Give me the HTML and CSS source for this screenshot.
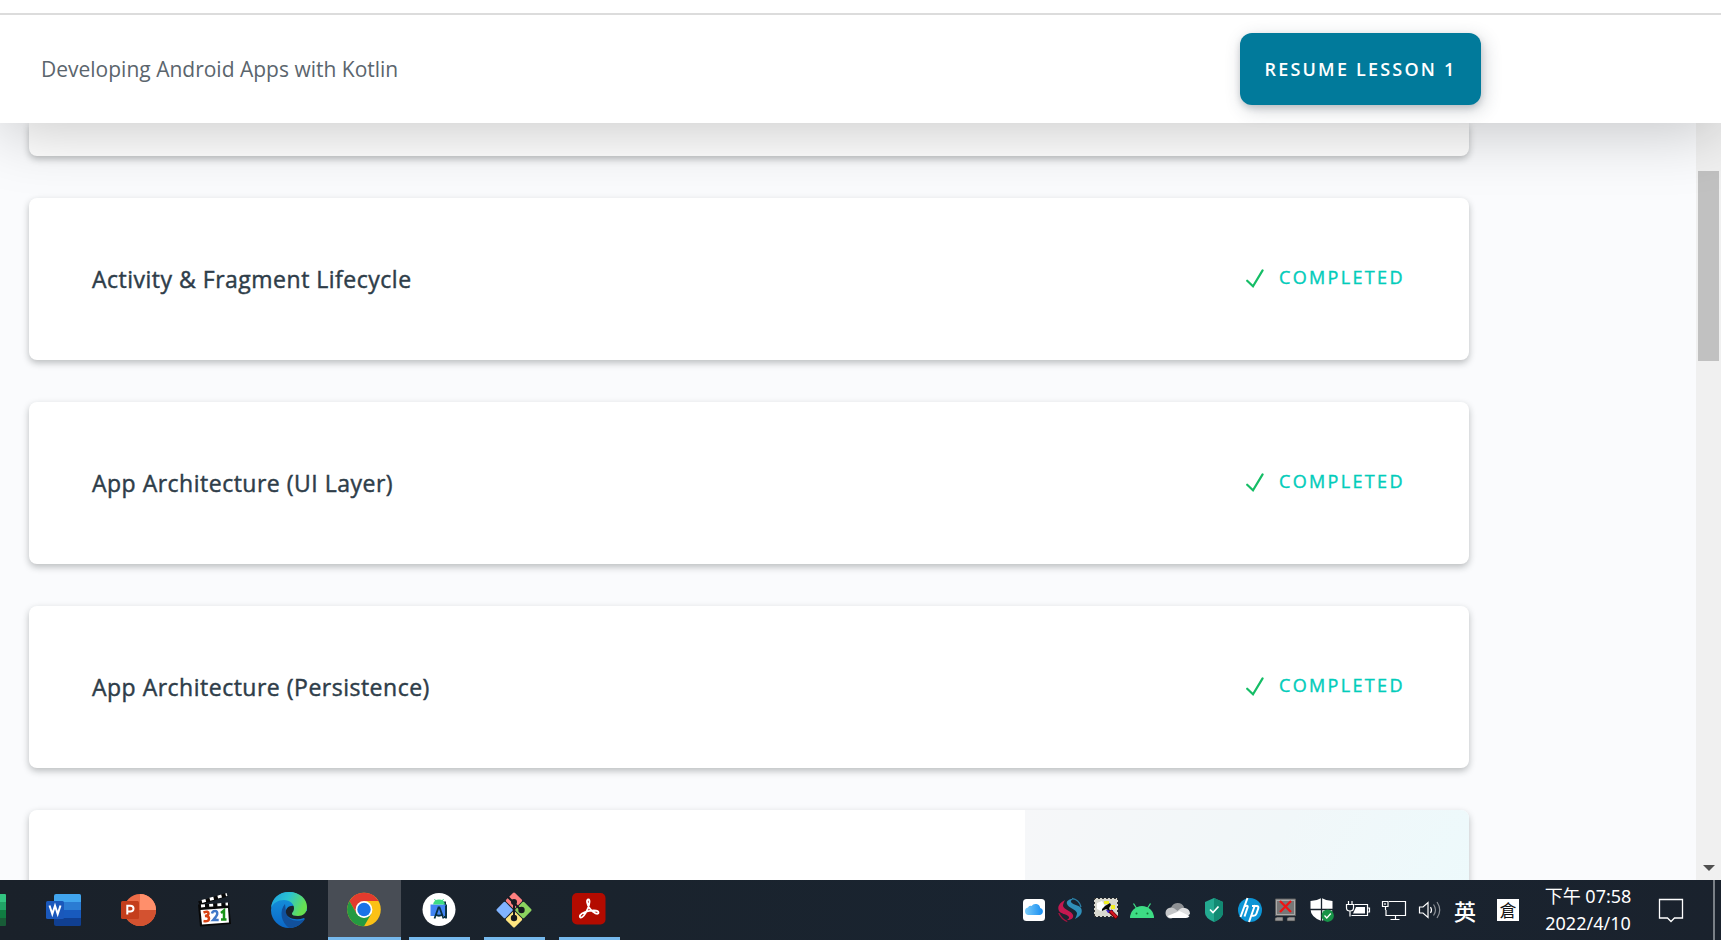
FILE: index.html
```html
<!DOCTYPE html>
<html lang="zh-Hant">
<head>
<meta charset="utf-8">
<title>Developing Android Apps with Kotlin</title>
<link rel="stylesheet" href="styles.css">
</head>
<body>
<div class="screen">
  <header class="header">
    <div class="header-row">
      <h1 class="course">Developing Android Apps with Kotlin</h1>
      <button class="resume">RESUME LESSON 1</button>
    </div>
  </header>

  <div class="viewport">
    <main class="lessons">
      <section class="card card-first"></section>
      <section class="card">
        <h2 class="card-title">Activity &amp; Fragment Lifecycle</h2>
        <div class="status"><svg class="check" viewBox="0 0 18 20"><path d="M1.2 11.7 7 17.2 16.6 1.4"/></svg><span>COMPLETED</span></div>
      </section>
      <section class="card">
        <h2 class="card-title">App Architecture (UI Layer)</h2>
        <div class="status"><svg class="check" viewBox="0 0 18 20"><path d="M1.2 11.7 7 17.2 16.6 1.4"/></svg><span>COMPLETED</span></div>
      </section>
      <section class="card">
        <h2 class="card-title">App Architecture (Persistence)</h2>
        <div class="status"><svg class="check" viewBox="0 0 18 20"><path d="M1.2 11.7 7 17.2 16.6 1.4"/></svg><span>COMPLETED</span></div>
      </section>
      <section class="card card-last"><div class="panel"></div></section>
    </main>
    <div class="scrollbar"><div class="thumb"></div><div class="arrow"></div></div>
  </div>

  <footer class="taskbar">
    <div class="apps">
      <div class="edge-app"><svg width="6" height="32" viewBox="0 0 6 32"><path fill="#33c481" d="M0 0h5q1 0 1 1v7H0z"/><path fill="#21a366" d="M0 8h6v8H0z"/><path fill="#107c41" d="M0 16h6v8H0z"/><path fill="#185c37" d="M0 24h6v7q0 1-1 1H0z"/></svg></div>
      <div class="app"><svg viewBox="0 0 36 36">
        <path fill="#41a5ee" d="M10 2h23.5q1.5 0 1.5 1.500V10H8V4q0-2 2-2z"/><path fill="#2b7cd3" d="M8 10h27v8H8z"/><path fill="#185abd" d="M8 18h27v8H8z"/><path fill="#103f91" d="M8 26h27v6.500q0 1.500-1.500 1.500H10q-2 0-2-2z"/>
        <rect x="0" y="9" width="18" height="18" rx="1.500" fill="#1a58bb"/><path d="M3.500 13.500 6.300 22 9 13.800 11.700 22 14.500 13.500" fill="none" stroke="#fff" stroke-width="2"/></svg></div>
      <div class="app"><svg viewBox="0 0 36 36">
        <circle cx="19" cy="18" r="16" fill="#ed6c47"/><path fill="#ff8f6b" d="M19 2a16 16 0 0 1 16 16H19z"/><path fill="#d35230" d="M3 18h32a16 16 0 0 1-32 0z"/>
        <rect x="0" y="9" width="18" height="18" rx="1.500" fill="#c43e1c"/><path d="M6.300 22.500v-8.700h3q3.200 0 3.200 2.800t-3.300 2.800H6.500" fill="none" stroke="#fff" stroke-width="2"/></svg></div>
      <div class="app"><svg viewBox="0 0 36 36">
        <path d="M2 12.500 33 11 35 32 4 34.500z" fill="#080808"/><path d="M4.500 18 32 16 33 30.500 6 32.500z" fill="#fff"/>
        <path d="M2 9.500 30 1 31.500 4.500 4 13z" fill="#080808"/><path d="M4 10 31 2.500" stroke="#fff" stroke-width="3" stroke-dasharray="4 4.200" stroke-dashoffset="-2"/><path d="M5 14 32 12" stroke="#fff" stroke-width="2.800" stroke-dasharray="4 4.200"/>
        <g fill="none" stroke-width="2.500"><path stroke="#d84315" d="M7.500 20.500q5-2 5 1 0 2-3.500 2.500 4 0 4 2.500 0 3.500-5.500 2.500"/><path stroke="#3f78c8" d="M16 21.500q.5-2.500 3-2.500t2.200 3q-.3 2-4 6h5.500"/><path stroke="#1b9418" d="M25 21 28 18.500v8.500m-3 .5h5.500"/></g></svg></div>
      <div class="app"><svg viewBox="0 0 36 36">
        <defs><linearGradient id="e1" x1="0" y1="0" x2="1" y2=".35"><stop offset="0" stop-color="#1b9de2"/><stop offset=".5" stop-color="#2bc3d2"/><stop offset="1" stop-color="#66e050"/></linearGradient><linearGradient id="e2" x1="0" y1="0" x2="0" y2="1"><stop offset="0" stop-color="#1697dd"/><stop offset="1" stop-color="#0b68c8"/></linearGradient></defs>
        <circle cx="18" cy="18" r="18" fill="url(#e2)"/><path fill="#11509b" d="M14 12c-6 7-4 18 4 24 7 0 13-4 16-9-8 4-18 1-19-7z"/>
        <path fill="#1a222c" d="M23 14c-5-1-9 3-8 7 1 5 9 8 18 5l1 1 4-1V20z"/>
        <path fill="url(#e1)" d="M0 16C1 6 8 0 18 0c11 0 18 7 18 15 0 6-4 9-9 9-4 0-6-1-6-2 0-2 2-2 2-6 0-4-4-8-10-8C7 8 2 11 0 16z"/></svg></div>
      <div class="app active"><svg viewBox="0 0 36 36">
        <circle cx="18" cy="17.500" r="16.800" fill="#fbc116"/><path fill="#e33b2e" d="M3.450 9.100A16.800 16.800 0 0 1 32.550 9.100L18 9.100 10.700 21.700z"/><path fill="#249a41" d="M3.450 9.100A16.800 16.800 0 0 0 18 34.300L25.300 21.700 18 26 10.700 21.700z"/>
        <circle cx="18" cy="17.500" r="8.400" fill="#fff"/><circle cx="18" cy="17.500" r="6.700" fill="#1a73e8"/></svg></div>
      <div class="app running"><svg viewBox="0 0 36 36">
        <circle cx="18" cy="17.500" r="16.500" fill="#fff"/><path fill="#083042" d="M22 9.500h3v3h1V26h-3V14z"/><path fill="#4285f4" d="M9.500 12.500H24.500V24H9.500z"/><path fill="#3ddc84" d="M12 12.500q1-5 6-5t6 5z"/><path stroke="#3ddc84" d="M13.500 7l1.500 2.500M22.500 7 21 9.500"/><path d="M13.500 26.500 17.500 15.500h1l4 11M14.500 22.500q3.500 2.500 7 0M25 14v12.500" fill="none" stroke="#083042" stroke-width="1.800"/></svg></div>
      <div class="app running"><svg viewBox="0 0 36 36">
        <g transform="rotate(45 18 18)"><rect x="5.200" y="5.200" width="12.300" height="12.300" rx="1.500" fill="#ff8080"/><rect x="18.500" y="5.200" width="12.300" height="12.300" rx="1.500" fill="#8cd35f"/><rect x="5.200" y="18.500" width="12.300" height="12.300" rx="1.500" fill="#80b3ff"/><rect x="18.500" y="18.500" width="12.300" height="12.300" rx="1.500" fill="#ffe680"/></g>
        <path d="M12 5 18 11V26M18 11l7 7" fill="none" stroke="#171a20" stroke-width="2"/><g fill="#171a20"><circle cx="18" cy="10" r="3"/><circle cx="18" cy="26" r="3.200"/><circle cx="25.500" cy="18" r="3.200"/></g></svg></div>
      <div class="app running"><svg viewBox="0 0 36 36">
        <rect x="1" y="1" width="33.500" height="31.500" rx="5" fill="#b30b00"/><path d="M17.600 7.500c-3 0-1.300 5.500 1.200 9 3.500 5 8.700 6.500 8.700 4.200 0-3-8-2.600-13.500-.7-5 1.700-6 4.500-4.600 5.400 1.800 1 5-3 7.500-9 2-5 2-8.900.7-8.900z" fill="none" stroke="#fff" stroke-width="1.800"/></svg></div>
    </div>

    <div class="tray">
      <svg viewBox="0 0 24 24"><defs><linearGradient id="cl" x1="1" x2="0"><stop offset="0" stop-color="#168df2"/><stop offset="1" stop-color="#7cccf8"/></linearGradient></defs><rect x="1" y="1" width="22" height="22" rx="3.500" fill="#fff"/><path fill="url(#cl)" d="M6.500 17A3.800 3.800 0 0 1 6 9.500 2.800 2.800 0 0 1 9.500 8a4.800 4.800 0 0 1 8.700 2A3.600 3.600 0 0 1 18 17z"/></svg>
      <svg viewBox="0 0 24 24"><path fill="#c41850" d="M7 2C1 5-1 9 1 13c2 3 7 3 9 5 2 1 1 3-1 4 4 0 7-2 6-5-1-4-9-5-10-9 0-2 1-4 2-6z"/><path fill="none" stroke="#a3133f" stroke-width="1.300" d="M.800 15c2 5 5 7 8.500 8.500"/><path fill="#2f8fb9" d="M17 21c6-3 8-7 6-11-2-3-7-3-9-5-2-1-1-3 1-4-4 0-7 2-6 5 1 4 9 5 10 9 0 2-1 4-2 6z"/><path fill="none" stroke="#2a7fa6" stroke-width="1.300" d="M23 9c-1-5-5-8-9-8.500"/></svg>
      <svg viewBox="0 0 24 24"><rect x="0" y="0" width="24" height="19" fill="#d8d8d0"/><path stroke="#333" stroke-dasharray="2 2" stroke-width="1" d="M0 .5h24M0 18.500h23M.500 0v19M23.500 0v14"/><path d="M10 3h5v3h-5zM17 7h4v4h-4z" fill="#f2ef24"/><path d="M12 12h7v3h-5z" fill="#3c24c8"/><path d="m3 5 5-2 3 5-4 5-4-2z" fill="#fff"/><path d="m8 11 3-3 5-3 1 2-2 3 1 3-4-2-4 2z" fill="#080808"/><path d="m16 13 7 7" stroke="#600" stroke-width="4"/><path d="m16.500 13 6 6.500" stroke="#d41620" stroke-width="2.500"/></svg>
      <svg viewBox="0 0 24 24"><path fill="#3ddc84" d="M0 20a12 12 0 0 1 24 0z"/><path d="M3.500 5.500 7 11M20.500 5.500 17 11" stroke="#3ddc84" stroke-width="1.300"/><circle cx="6.500" cy="15.500" r="1" fill="#173"/><circle cx="17.500" cy="15.500" r="1" fill="#173"/></svg>
      <svg viewBox="0 0 24 24"><path fill="#8d9094" d="M5 10a7 7 0 0 1 13-1l-4 7-9 1z"/><path fill="#c4c6c8" d="M5 9.500q3 0 6 3l7 4-13 4A5.500 5.500 0 0 1 5 9.500z"/><path fill="#dfe0e1" d="M11 14q4-5 8-4 5 1 5 6l-4 3z"/><path fill="#fff" d="m1.500 18 12-5 10 5q-1 2-3.500 2H5q-2 0-3.500-2z"/></svg>
      <svg viewBox="0 0 24 24"><path fill="#23a990" d="m12 0 9 4v11q0 5-9 9-9-4-9-9V4z"/><path fill="#128a73" d="m12 0 9 4v11q0 5-9 9z"/><path d="m8 11.500 3 3 5.500-6" fill="none" stroke="#fff" stroke-width="1.700"/></svg>
      <svg viewBox="0 0 24 24"><circle cx="12" cy="12" r="12" fill="#0c95d6"/><path d="M9.500 0 2.500 19M5.800 8.500q4.500-2 3.800.8L6.500 18.500M17 7 11 24M14 8h4.500q2.500 0 1.700 2.500l-1.800 5.300q-.7 2-2.900 2H13" fill="none" stroke="#fff" stroke-width="2"/></svg>
      <svg viewBox="0 0 24 24"><path fill="#aaa" stroke="#5e5e5e" d="M1.500 1h20v16.500h-20z"/><path fill="#777" d="M3 3h17v13H3z"/><path d="m6 3 11 11M17 3 6 14" stroke="#f01414" stroke-width="2.300"/><path d="M3 19h6v4H1v-3zM15 19h6v4h-8v-3z" fill="#999" stroke="#333" stroke-width=".6"/></svg>
      <svg viewBox="0 0 24 24"><path fill="#fff" d="M11.500 0q5 3 11 3v8q0 8-11 12Q.5 19 .5 11V3q6 0 11-3z"/><path stroke="#18222d" stroke-width="1.300" d="M11.500 0v23M0 11.500h23"/><circle cx="17.700" cy="17.700" r="6.200" fill="#179347"/><path d="m14.500 17.500 2.300 2.500 4-4.500" stroke="#fff" stroke-width="1.300" fill="none"/></svg>
      <svg viewBox="0 0 24 24" class="line"><path d="M8.500 6.500h13v11H5.500M21.500 10h2v4h-2M2.500 3v3M6 3v3M.5 6.500h7V10q0 3-3.500 3T.5 10zM4 13v5.500"/><path class="solid" d="M10 9h9v6.500H7z"/></svg>
      <svg viewBox="0 0 24 24" class="line"><path d="M7 3.500h16.500v14H4V12M13.500 18v3M8.500 21.500h9M.5 3.500H6v5H.5zM3.500 8.500V12M3 5v2"/></svg>
      <svg viewBox="0 0 24 24" class="line"><path d="M1.500 9H5l5-4.500v15L5 15H1.500zM12.500 9q2 3 0 6"/><path opacity=".5" d="M15.500 6.500q4 5.500 0 11M19 4q5.500 8 0 16"/></svg>
      <span class="lang">英</span>
      <span class="ime">倉</span>
      <div class="clock"><span>下午 07:58</span><span>2022/4/10</span></div>
      <svg class="notice" viewBox="0 0 24 24"><path d="M.500 1.500h23v18.500h-8L12 23.500 8.500 20h-8z"/></svg>
      <div class="peek"></div>
    </div>
  </footer>
</div>
</body>
</html>
```

FILE: styles.css
```css
* { box-sizing: border-box; margin: 0; }
body { background: #fafbfd; font-family: "Open Sans", "Noto Sans", sans-serif; overflow: hidden; }
.screen { display: flex; flex-direction: column; height: 940px; width: 1721px; overflow: hidden; }

.header { position: relative; z-index: 2; flex: none; height: 123px; padding-top: 13px; background: #fff; box-shadow: 0 8px 64px rgba(0, 0, 0, .22); }
.header-row { display: flex; align-items: center; justify-content: space-between; height: 110px; padding: 0 240px 0 41px; border-top: 2px solid #dcdcdc; }
.course { margin-top: -1px; font-size: 21px; font-weight: 400; color: #5b656d; white-space: nowrap; }
.resume { width: 241px; height: 72px; padding: 0; border: 0; border-radius: 12px; background: #017a9b; color: #fff; font: 600 18px "Open Sans", sans-serif; letter-spacing: 2.200px; white-space: nowrap; box-shadow: 3px 5px 18px rgba(46, 60, 73, .22), 0 3px 6px rgba(46, 60, 73, .2); }

.viewport { flex: 1; min-height: 0; display: flex; justify-content: space-between; overflow: hidden; }
.lessons { display: flex; flex-direction: column; gap: 42px; width: 1469px; padding-left: 29px; }
.card { flex: none; display: flex; justify-content: space-between; height: 162px; padding: 0 62px 0 63px; border-radius: 8px; background: #fff; box-shadow: 0 3px 7px rgba(20, 30, 30, .28); }
.card-first { height: 33px; border-radius: 0 0 8px 8px; }
.card-title { padding-top: 64px; font-size: 23px; line-height: 34px; font-weight: 400; letter-spacing: .5px; -webkit-text-stroke: .45px #2e3d49; color: #2e3d49; white-space: nowrap; }
.status { display: flex; align-items: flex-start; padding-top: 67px; gap: 15px; color: #02ccba; font-size: 18px; line-height: 24px; font-weight: 400; letter-spacing: 2.350px; -webkit-text-stroke: .4px #02ccba; }
.status span { width: 128px; }
.check { width: 18px; height: 20px; margin-top: 4px; fill: none; stroke: #15bd66; stroke-width: 2.200; stroke-linecap: round; }
.card-last { padding: 0; justify-content: flex-end; overflow: hidden; }
.panel { width: 444px; background: linear-gradient(120deg, #f6f7f9, #f1f7f9 50%, #ecfafc); }

.scrollbar { display: flex; flex-direction: column; align-items: center; justify-content: space-between; width: 25px; padding: 48px 0 9px; background: #f0f0f0; }
.thumb { width: 21px; height: 190px; background: #c1c1c1; }
.arrow { border: 6px solid transparent; border-top-color: #505050; border-bottom: 0; }

.taskbar { flex: none; position: relative; z-index: 3; display: flex; justify-content: space-between; height: 60px; background: linear-gradient(90deg, #1a212a, #1a232d 35%, #192431 65%, #1a222d); }
.apps { display: flex; }
.edge-app { width: 27px; padding-top: 14px; }
.edge-app svg { display: block; }
.app { display: flex; flex-direction: column; align-items: center; width: 75px; padding: 12px 1px 0 0; }
.app svg { width: 36px; height: 36px; flex: none; }
.active { width: 73px; margin: 0 1px; background: #484d55; border-bottom: 3px solid #76b9ed; }
.running::after { content: ""; width: 61px; height: 3px; margin: 9px 0 0 1px; background: #76b9ed; }
.tray { display: flex; align-items: center; gap: 12px; }
.tray > svg { width: 24px; height: 24px; flex: none; overflow: visible; }
.line { fill: none; stroke: #fff; stroke-width: 1.200; }
.line .solid { fill: #fff; stroke: none; }
.lang { width: 24px; margin-left: -1px; font: 500 22px/24px "Noto Sans CJK TC", sans-serif; color: #fff; text-align: center; }
.ime { width: 22px; height: 22px; margin-left: 8px; background: #fff; color: #111; font: 17px/21px "Noto Sans CJK TC", sans-serif; text-align: center; }
.clock { display: flex; flex-direction: column; align-items: center; width: 88px; margin-left: 13px; color: #fff; font: 18px/27px "Noto Sans", "Noto Sans CJK TC", sans-serif; white-space: nowrap; }
.tray > .notice { margin-left: 15px; fill: none; stroke: #fff; stroke-width: 1.300; }
.peek { width: 8px; height: 60px; margin-left: 18px; border-left: 2px solid #7a8087; }
```
